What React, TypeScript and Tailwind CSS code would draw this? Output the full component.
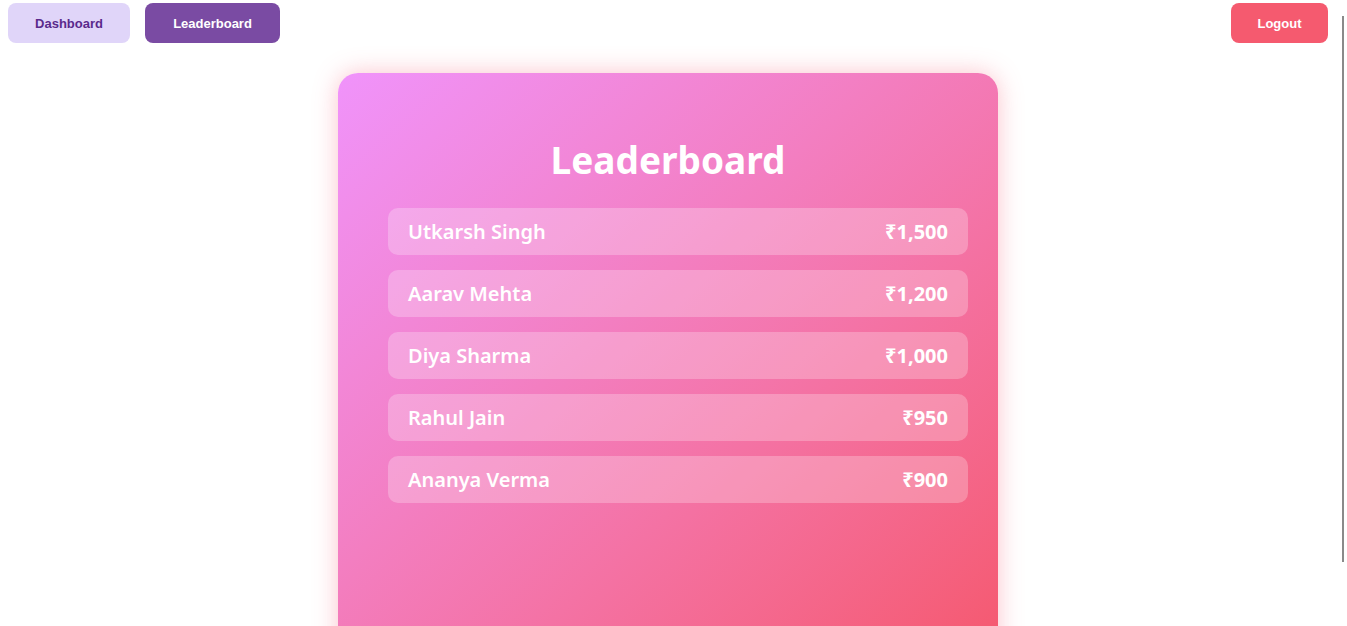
import React from "react";

const players = [
  { name: "Utkarsh Singh", amount: "₹1,500" },
  { name: "Aarav Mehta", amount: "₹1,200" },
  { name: "Diya Sharma", amount: "₹1,000" },
  { name: "Rahul Jain", amount: "₹950" },
  { name: "Ananya Verma", amount: "₹900" },
];

export default function App() {
  return (
    <div className="relative h-[626px] w-[1347px] overflow-hidden bg-white">
      <div className="w-[1336px]">
        <nav className="flex items-center justify-between px-2 pt-[3px] font-['Liberation_Sans',Arial,sans-serif] text-[13px] font-bold">
          <div className="flex gap-[15px]">
            <button className="h-10 w-[122px] rounded-lg bg-[#e0d5f9] pt-px text-[#5a2a8c]">Dashboard</button>
            <button className="h-10 w-[135px] rounded-lg bg-[#7a4ba3] pt-px text-white">Leaderboard</button>
          </div>
          <button className="h-10 w-[97px] rounded-lg bg-[#f55a6f] pt-px text-white">Logout</button>
        </nav>

        <main className="mt-[30px] flex justify-center">
          <section className="h-[600px] w-[660px] rounded-[20px] bg-gradient-to-br from-[#f093fb] to-[#f5576c] pl-[50px] pt-[64px] font-['Noto_Sans','Open_Sans',sans-serif] text-white shadow-[0_0_24px_rgba(245,87,108,0.35)]">
            <h1 className="w-[560px] text-center text-[37px] font-bold leading-[46px]">Leaderboard</h1>
            <ul className="mt-[25px] flex w-[580px] flex-col gap-[15px]">
              {players.map((p) => (
                <li
                  key={p.name}
                  className="flex h-[47px] items-center justify-between rounded-[10px] bg-white/25 px-5 pt-px text-[20px]"
                >
                  <span className="font-semibold">{p.name}</span>
                  <span className="font-bold">{p.amount}</span>
                </li>
              ))}
            </ul>
          </section>
        </main>
      </div>

      <div className="absolute left-[1342px] top-[16px] h-[546px] w-[2px] bg-[#8a8a8a]" />
    </div>
  );
}
